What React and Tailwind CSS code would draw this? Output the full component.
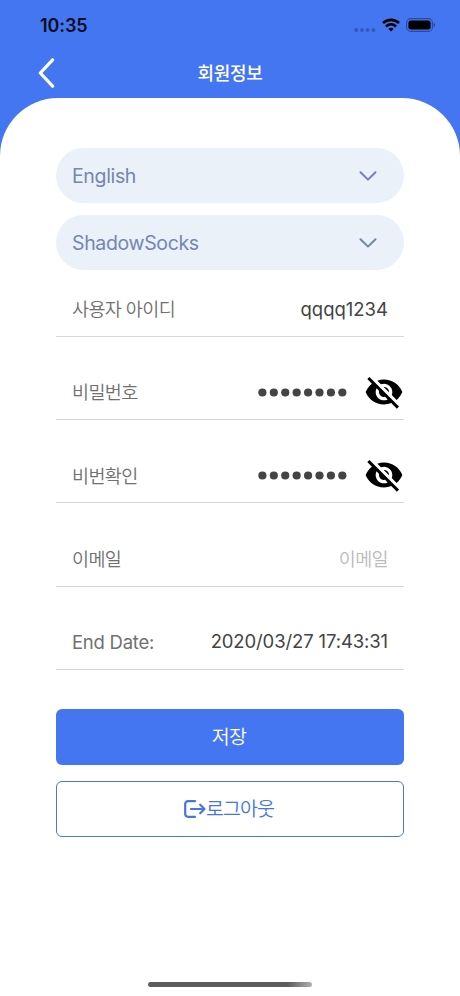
import React, { useState } from "react";

const ChevronDown = () => (
  <svg width="18" height="10" viewBox="0 0 18 10" fill="none" stroke="#7283b4" strokeWidth="2" strokeLinecap="round" strokeLinejoin="round">
    <path d="M1.5 1.2L9 8.6L16.5 1.2" />
  </svg>
);

const EyeOff = () => (
  <svg width="40" height="40" viewBox="0 0 24 24" fill="#000">
    <path d="M12 7c2.76 0 5 2.24 5 5 0 .65-.13 1.26-.36 1.83l2.92 2.92c1.51-1.26 2.7-2.89 3.43-4.75-1.73-4.39-6-7.5-11-7.5-1.4 0-2.74.25-3.98.7l2.16 2.16C10.74 7.13 11.35 7 12 7zM2 4.27l2.28 2.28.46.46C3.08 8.3 1.78 10.02 1 12c1.73 4.39 6 7.5 11 7.5 1.55 0 3.03-.3 4.38-.84l.42.42L19.73 22 21 20.73 3.27 3 2 4.27zM7.53 9.8l1.55 1.55c-.05.21-.08.43-.08.65 0 1.66 1.34 3 3 3 .22 0 .44-.03.65-.08l1.55 1.55c-.67.33-1.41.53-2.2.53-2.76 0-5-2.24-5-5 0-.79.2-1.53.53-2.2zm4.31-.78l3.15 3.15.02-.16c0-1.66-1.34-3-3-3l-.17.01z" />
  </svg>
);

const StatusBar = () => (
  <div className="flex h-[50px] items-center justify-between pl-10 pr-6">
    <span className="pt-px text-[18px] font-semibold tracking-[-0.1px] text-[#070c1c]">10:35</span>
    <div className="flex items-center">
      <svg width="22" height="6" viewBox="0 0 22 6" fill="#3159bd" className="mt-[9px]">
        <circle cx="2.2" cy="3" r="1.9" />
        <circle cx="8" cy="3" r="1.9" />
        <circle cx="13.6" cy="3" r="1.9" />
        <circle cx="19.4" cy="3" r="1.9" />
      </svg>
      <svg width="18" height="14" viewBox="0 0 18 14" className="ml-[6px]" fill="none" stroke="#000" strokeWidth="2.7">
        <path d="M1 5C5.5 0.8 12.5 0.8 17 5" />
        <path d="M4 8.4C6.9 5.8 11.1 5.8 14 8.4" />
        <path d="M6.4 10.7C7.9 9.4 10.1 9.4 11.6 10.7L9 13.4Z" fill="#000" stroke="none" />
      </svg>
      <svg width="30" height="14" viewBox="0 0 30 14" className="ml-[6px]">
        <rect x="0.6" y="0.6" width="25.8" height="12.8" rx="4" fill="none" stroke="#294a9b" strokeWidth="1.1" />
        <rect x="2.4" y="2.4" width="22.2" height="9.2" rx="2.3" fill="#000" />
        <path d="M27.6 4.8c2 .5 2 3.9 0 4.4z" fill="#294a9b" />
      </svg>
    </div>
  </div>
);

const SelectBox = ({ label }) => (
  <button className="flex h-[55px] w-full items-center justify-between rounded-full bg-[#eaf1f9] pl-4 pr-[27px] text-[19.5px] font-normal text-[#7486b2]">
    <span className="pt-[2px] tracking-[-0.35px]">{label}</span>
    <ChevronDown />
  </button>
);

const Row = ({ label, children }) => (
  <div className="flex h-[83.3px] items-end border-b border-[#d5d6da] pb-[7px] pl-4">
    <div className="flex h-10 w-full items-center justify-between">
      <span className="pt-[2px] text-[18.5px] font-[350] tracking-[-0.6px] text-[#707070]">{label}</span>
      {children}
    </div>
  </div>
);

const Password = () => {
  const [hidden, setHidden] = useState(true);

  return (
    <div className="flex items-center">
      {hidden ? (
        <svg width="89" height="9" viewBox="0 0 89 9" fill="#444" className="mr-[17px]">
          {[...Array(8)].map((_, i) => (
            <circle key={i} cx={4.4 + i * 11.42} cy="4.5" r="4.1" />
          ))}
        </svg>
      ) : (
        <span className="mr-[17px] text-[18.5px] text-[#444]">qqqq1234</span>
      )}
      <button onClick={() => setHidden(!hidden)}>
        <EyeOff />
      </button>
    </div>
  );
};

export default function App() {
  return (
    <div className="flex h-[996px] w-[460px] flex-col bg-[#4576f1] font-['Inter','Noto_Sans_CJK_KR',sans-serif]">
      <StatusBar />

      {/* Title bar */}
      <div className="grid h-12 grid-cols-[1fr_auto_1fr] items-center pl-[38px] pr-[38px]">
        <button className="-mt-[2px] w-4">
          <svg width="17" height="30" viewBox="0 0 17 30" fill="none" stroke="#fff" strokeWidth="3.2" strokeLinecap="round" strokeLinejoin="round">
            <path d="M14.6 1.8L2.3 15L14.6 28.2" />
          </svg>
        </button>
        <h1 className="text-[18px] font-medium leading-none tracking-[-0.3px] text-white">회원정보</h1>
      </div>

      <div className="flex flex-1 flex-col rounded-t-[58px] bg-white px-14 pt-[50px]">
        <div className="flex flex-col gap-3">
          <SelectBox label="English" />
          <SelectBox label="ShadowSocks" />
        </div>

        {/* Account info */}
        <div className="-mt-[16.5px]">
          <Row label="사용자 아이디">
            <span className="mr-4 pt-[2px] text-[18.5px] text-[#444]">qqqq1234</span>
          </Row>
          <Row label="비밀번호">
            <Password />
          </Row>
          <Row label="비번확인">
            <Password />
          </Row>
          <Row label="이메일">
            <span className="mr-4 pt-[2px] text-[18.5px] font-[350] tracking-[-0.6px] text-[#bbb]">이메일</span>
          </Row>
          <Row label={<span className="font-normal tracking-[-0.25px]">End Date:</span>}>
            <span className="mr-4 text-[18.5px] tracking-[-0.12px] text-[#444]">2020/03/27 17:43:31</span>
          </Row>
        </div>

        {/* Buttons */}
        <div className="mt-[39.5px] flex flex-col gap-4">
          <button className="h-14 rounded-[6px] bg-[#4576f1] pr-[2px] text-[19.5px] font-[350] tracking-[-0.8px] text-white">저장</button>
          <button className="flex h-14 items-center justify-center rounded-[6px] border border-[#4d74d8] pr-[2px] text-[19.5px] font-[350] tracking-[-0.9px] text-[#4576e4]">
            <svg width="22" height="18" viewBox="0 0 22 18" fill="none" stroke="#4576e4" strokeWidth="2.2" strokeLinecap="round" strokeLinejoin="round">
              <path d="M11 1.2H4.2Q1.2 1.2 1.2 4.2V13.8Q1.2 16.8 4.2 16.8H11" />
              <path d="M7 9H20.5M16.2 4.7L20.5 9L16.2 13.3" />
            </svg>
            <span>로그아웃</span>
          </button>
        </div>

        <div className="mx-auto mb-[9px] mt-auto h-[5px] w-[164px] rounded-full bg-gradient-to-r from-[#5c5c5c] from-85% to-[#b0b0b0]"></div>
      </div>
    </div>
  );
}
